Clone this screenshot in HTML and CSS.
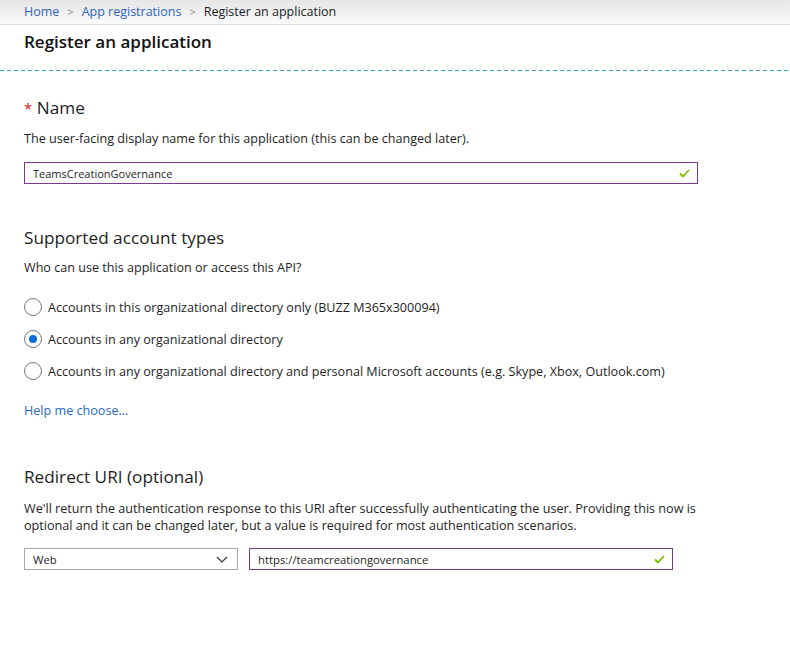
FILE: index.html
```html
<!DOCTYPE html>
<html>
<head>
<meta charset="utf-8">
<link rel="stylesheet" href="styles.css">
</head>
<body>
<div class="breadcrumb">
  <a class="crumb link">Home</a>
  <span class="sep">&gt;</span>
  <a class="crumb link">App registrations</a>
  <span class="sep">&gt;</span>
  <span class="crumb">Register an application</span>
</div>
<div class="titlebar">
  <h1 class="title">Register an application</h1>
</div>
<div class="dashed"></div>
<div class="content">
  <h2 class="heading h-name"><span class="req">*</span> Name</h2>
  <p class="desc d-name">The user-facing display name for this application (this can be changed later).</p>
  <div class="textbox tb-name">
    <span class="value">TeamsCreationGovernance</span>
    <svg class="check" width="11" height="9" viewBox="0 0 11 9"><path d="M1 4.5 L4 7.5 L10 1" fill="none" stroke="#7fba00" stroke-width="1.8"/></svg>
  </div>

  <h2 class="heading h-acct">Supported account types</h2>
  <p class="desc d-acct">Who can use this application or access this API?</p>
  <div class="radios">
    <div class="radio-row"><span class="radio"></span><span>Accounts in this organizational directory only (BUZZ M365x300094)</span></div>
    <div class="radio-row"><span class="radio checked"></span><span>Accounts in any organizational directory</span></div>
    <div class="radio-row"><span class="radio"></span><span>Accounts in any organizational directory and personal Microsoft accounts (e.g. Skype, Xbox, Outlook.com)</span></div>
  </div>
  <a class="link help">Help me choose...</a>

  <h2 class="heading h-uri">Redirect URI (optional)</h2>
  <p class="desc d-uri">We'll return the authentication response to this URI after successfully authenticating the user. Providing this now is optional and it can be changed later, but a value is required for most authentication scenarios.</p>
  <div class="uri-row">
    <div class="select">
      <span class="value">Web</span>
      <svg class="chev" width="12" height="7" viewBox="0 0 12 7"><path d="M1 1 L6 6 L11 1" fill="none" stroke="#333" stroke-width="1.2"/></svg>
    </div>
    <div class="textbox tb-uri">
      <span class="value">https://teamcreationgovernance</span>
      <svg class="check" width="11" height="9" viewBox="0 0 11 9"><path d="M1 4.5 L4 7.5 L10 1" fill="none" stroke="#7fba00" stroke-width="1.8"/></svg>
    </div>
  </div>
</div>
</body>
</html>
```
FILE: styles.css
```css
* { box-sizing: border-box; }
html, body { margin: 0; padding: 0; background: #fff; }
body {
  font-family: "Open Sans", "Noto Sans", sans-serif;
  font-size: 12.6px;
  color: #1e1e1e;
  width: 790px;
  height: 645px;
  overflow: hidden;
}
.link { color: #2a66c2; text-decoration: none; }
.breadcrumb {
  height: 25px;
  padding-left: 24px;
  display: flex;
  align-items: center;
  background: linear-gradient(#e6e6e6, #fafafa);
  border-bottom: 1px solid #dcdcdc;
  font-size: 12.5px;
  line-height: 24px;
}
.sep { color: #888; margin: 0 8px; font-size: 11px; }
.crumb { color: #1e1e1e; }
.crumb.link { color: #2a66c2; }
.titlebar {
  height: 45px;
  padding: 6px 24px 0;
}
.title {
  margin: 0;
  font-size: 17px;
  font-weight: 600;
  line-height: 22px;
  color: #111;
}
.dashed {
  height: 1px;
  background-image: repeating-linear-gradient(to right, #3aa6c0 0 4px, transparent 4px 7px);
}
.content { padding: 0 24px; }
.heading {
  margin: 0;
  font-size: 17.2px;
  font-weight: 400;
  line-height: 24px;
  color: #1e1e1e;
}
.req { color: #d42020; font-size: 15px; }
.h-name { margin-top: 25px; }
.desc { margin: 0; line-height: 17px; }
.d-name { margin-top: 10px; }
.textbox, .select {
  height: 22px;
  display: flex;
  align-items: center;
  padding: 0 7px 0 8px;
  font-size: 11.3px;
}
.textbox { border: 1px solid #793a90; justify-content: space-between; }
.tb-name { margin-top: 15px; width: 674px; }
.tb-name .value { font-size: 11px; }
.check { margin-top: 1px; }
.h-acct { margin-top: 42px; }
.d-acct { margin-top: 9px; }
.radios { margin-top: 15px; display: flex; flex-direction: column; }
.radio-row { height: 32px; display: flex; align-items: center; gap: 6px; }
.radio {
  width: 18px; height: 18px;
  border: 1px solid #7a7a7a;
  border-radius: 50%;
  position: relative;
  flex: none;
}
.radio.checked::after {
  content: "";
  position: absolute;
  left: 4px; top: 4px;
  width: 8px; height: 8px;
  border-radius: 50%;
  background: #0d6ed6;
}
.help { display: block; margin-top: 15px; line-height: 17px; }
.h-uri { margin-top: 46px; }
.d-uri { margin-top: 11px; width: 690px; }
.uri-row { margin-top: 14px; display: flex; gap: 11px; }
.select {
  width: 214px;
  border: 1px solid #a8a8a8;
  justify-content: space-between;
  padding-right: 9px;
}
.tb-uri { width: 424px; }
```
